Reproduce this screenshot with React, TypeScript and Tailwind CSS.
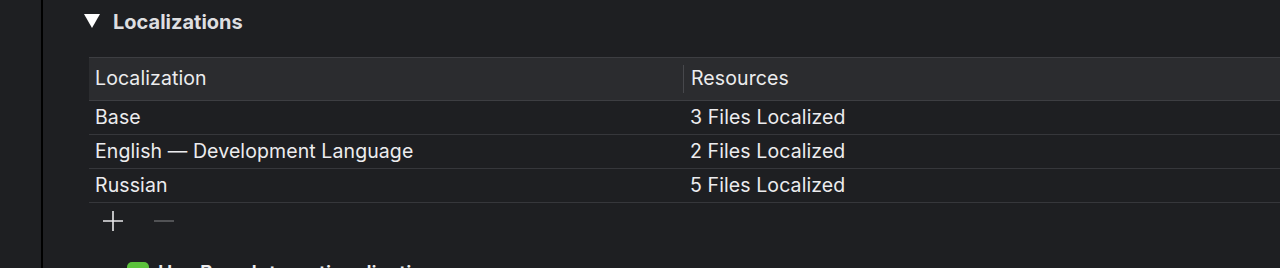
import React from 'react';

const rows = [
  { name: 'Base', res: '3 Files Localized' },
  { name: 'English — Development Language', res: '2 Files Localized' },
  { name: 'Russian', res: '5 Files Localized' },
];

export default function App() {
  return (
    <div className="flex h-[268px] w-[1280px] overflow-hidden bg-[#1e1f22] text-[#ececee] font-['Inter',sans-serif]">
      {/* left sidebar edge */}
      <div className="w-[43px] shrink-0 border-r-2 border-black bg-[#1e1f22]" />

      <div className="flex-1 pl-[41px]">
        {/* section title */}
        <div className="flex h-[57px] items-start pt-[10px]">
          <svg width="16" height="14" viewBox="0 0 16 14" className="mt-[4px]">
            <polygon points="0,0 16,0 8,14" fill="#ffffff" />
          </svg>
          <span className="ml-[13px] text-[20px] font-bold text-[#dedee0] leading-[24px]">Localizations</span>
        </div>

        {/* table */}
        <div className="ml-[5px] text-[19.5px] tracking-[0.1px]">
          <div className="flex h-[44px] items-center border-y border-[#3d3e42] bg-[#2b2c2f]">
            <div className="w-[594px] pl-[6px]">Localization</div>
            <div className="h-[28px] w-px bg-[#47484c]" />
            <div className="pl-[7px]">Resources</div>
          </div>
          {rows.map((r) => (
            <div key={r.name} className="flex h-[34px] items-center border-b border-[#36373b]">
              <div className="w-[595px] pl-[6px]">{r.name}</div>
              <div className="pl-[6px]">{r.res}</div>
            </div>
          ))}

          {/* add / remove */}
          <div className="flex h-[59px] items-start pt-[8px] pl-[14px]">
            <svg width="20" height="20" viewBox="0 0 20 20">
              <path d="M10 0 V20 M0 10 H20" stroke="#e8e8ea" strokeWidth="1.6" />
            </svg>
            <svg width="20" height="20" viewBox="0 0 20 20" className="ml-[31px]">
              <path d="M0 10 H20" stroke="#5e5f63" strokeWidth="1.6" />
            </svg>
          </div>

          {/* checkbox row */}
          <div className="flex items-start pl-[38px]">
            <div className="h-[22px] w-[22px] rounded-[5px] bg-[#5cc23c]" />
            <span className="ml-[9px] leading-[22px] font-semibold">Use Base Internationalization</span>
          </div>
        </div>
      </div>
    </div>
  );
}
